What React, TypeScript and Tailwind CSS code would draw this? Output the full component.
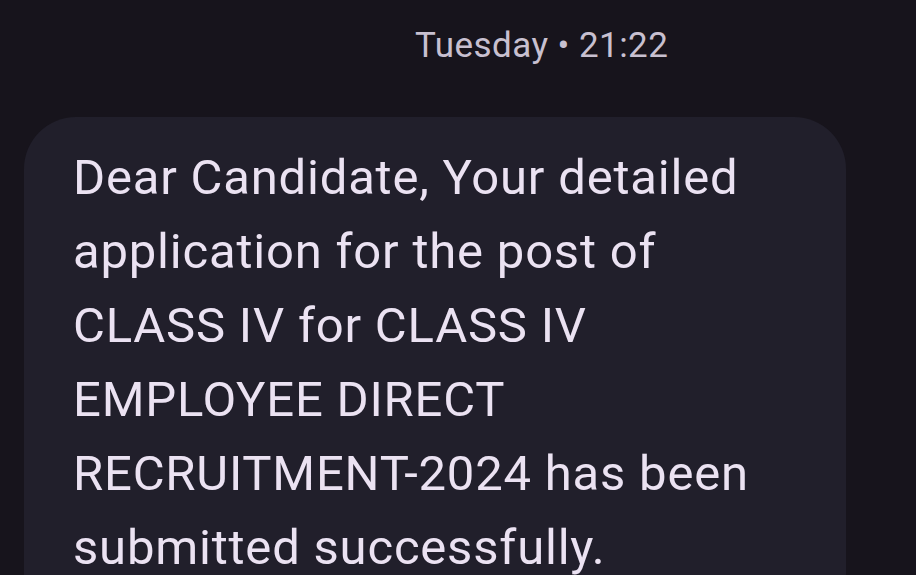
export default function App() {
  return (
    <div className="w-[916px] h-[575px] overflow-hidden bg-[#17141c] font-['Roboto',sans-serif]">
      <div className="pt-[26px] pl-[415px] text-[35px] leading-[40px] text-[#c8c0d0] tracking-[0.45px]">
        Tuesday • 21:22
      </div>
      <div className="mt-[51px] ml-[24px] w-[822px] rounded-[52px] bg-[#211f2b] pl-[49px] pr-[30px] pt-[24px] pb-[40px]">
        <p className="text-[49px] leading-[74px] tracking-[0.8px] text-[#ebe2f2]">
          Dear Candidate, Your detailed
          <br />
          application for the post of
          <br />
          CLASS IV for CLASS IV
          <br />
          EMPLOYEE DIRECT
          <br />
          RECRUITMENT-2024 has been
          <br />
          submitted successfully.
        </p>
      </div>
    </div>
  );
}
